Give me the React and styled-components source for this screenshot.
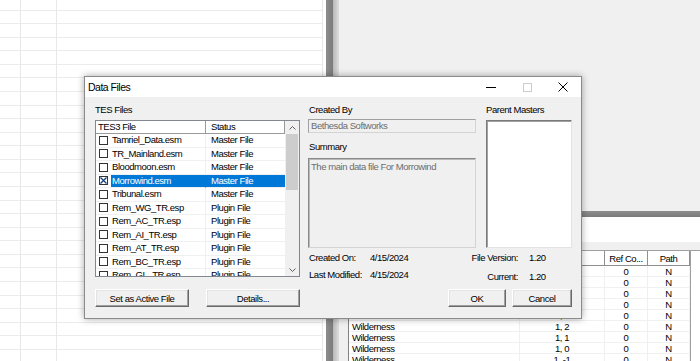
import React from "react";
import styled, { createGlobalStyle } from "styled-components";

const FONT = `"Liberation Sans", Arial, sans-serif`;

const GlobalStyle = createGlobalStyle`
  html, body { margin: 0; padding: 0; background: #fff; }
  body { font-family: ${FONT}; font-size: 9.5px; letter-spacing: -0.45px; color: #000; }
  * { box-sizing: border-box; }
`;

/* ---------- background app ---------- */

const Desktop = styled.div`
  position: relative;
  display: flex;
  width: 700px;
  height: 361px;
  overflow: hidden;
`;

const Sheet = styled.div`
  display: flex;
  width: 323px;
  flex: none;
  background-color: #fff;
  background-image: repeating-linear-gradient(
    to bottom,
    transparent 0,
    transparent 12.57px,
    #ececec 12.57px,
    #ececec 13.57px
  );
  background-position: 0 -3px;
`;

const SheetCol = styled.div`
  width: ${(p) => p.$w}px;
  border-right: 1px solid #e8e8e8;
`;

const Splitter = styled.div`
  width: 16px;
  flex: none;
  background: linear-gradient(
    to right,
    #fff 0,
    #fff 3px,
    #8c8c8c 3px,
    #7c7c7c 10px,
    #b8b8b8 10px,
    #dedede 16px
  );
`;

const RightPane = styled.div`
  flex: 1;
  display: flex;
  flex-direction: column;
  background: #f0f0f0;
`;

const Strip = styled.div`
  flex: none;
  height: ${(p) => p.$h}px;
  background: ${(p) => p.$bg || "transparent"};
`;

const TableArea = styled.div`
  flex: 1;
  min-height: 0;
  display: flex;
  padding-left: 9px;
  background: #f0f0f0;
  overflow: hidden;
`;

const Table = styled.div`
  width: 353px;
  background: #fff;
  border-left: 1px solid #828282;
  border-top: 1px solid #a0a0a0;
`;

const TRow = styled.div`
  display: grid;
  grid-template-columns: 171px 85px 43px 42px;
  height: ${(p) => (p.$head ? 15 : 11)}px;
  border-right: 1px solid #a0a0a0;
  width: 342px;
`;

const TCell = styled.div`
  display: flex;
  align-items: center;
  justify-content: ${(p) => (p.$left ? "flex-start" : "center")};
  padding-left: ${(p) => (p.$left ? 3 : 0)}px;
  white-space: nowrap;
  overflow: hidden;
  line-height: 11px;
  border-right: 1px solid ${(p) => (p.$head ? "#8f8f8f" : "#f0f0f0")};
  border-bottom: 1px solid ${(p) => (p.$head ? "#8f8f8f" : "#f0f0f0")};
`;

/* ---------- dialog ---------- */

const Window = styled.div`
  position: absolute;
  left: 84px;
  top: 76px;
  width: 498px;
  height: 243px;
  display: flex;
  flex-direction: column;
  border: 1px solid #8a8a8a;
  background: #f0f0f0;
  box-shadow: 0 0 7px rgba(0, 0, 0, 0.35);
`;

const TitleBar = styled.div`
  height: 20px;
  flex: none;
  display: flex;
  align-items: center;
  background: #fff;
`;

const Title = styled.div`
  flex: 1;
  padding-left: 3px;
  font-size: 10.5px;
  letter-spacing: -0.5px;
`;

const Ctl = styled.div`
  width: 36px;
  height: 20px;
  display: flex;
  align-items: center;
  justify-content: center;
`;

const MinGlyph = styled.div`
  width: 10px;
  height: 1px;
  background: #000;
`;

const MaxGlyph = styled.div`
  width: 9px;
  height: 9px;
  border: 1px solid #cccccc;
`;

const Body = styled.div`
  flex: 1;
  display: flex;
  gap: 8px;
  padding: 6px 9px 11px 10px;
`;

const Pane = styled.div`
  display: flex;
  flex-direction: column;
  width: ${(p) => p.$w}px;
`;

const Label = styled.div`
  height: 13px;
  line-height: 13px;
  white-space: nowrap;
  padding-left: ${(p) => p.$pad || 0}px;
  margin-top: ${(p) => p.$mt || 0}px;
`;

const ListView = styled.div`
  margin-top: 4px;
  height: 157px;
  display: flex;
  border: 1px solid #828790;
  background: #fff;
`;

const ListBody = styled.div`
  width: 189px;
  overflow: hidden;
`;

const LRow = styled.div`
  display: grid;
  grid-template-columns: 110px 79px;
  height: ${(p) => (p.$head ? 13 : 13.5)}px;
`;

const HeadCell = styled.div`
  padding-left: ${(p) => p.$pad}px;
  line-height: 12px;
  border-right: 1px solid #9a9a9a;
  border-bottom: 1px solid #9a9a9a;
  white-space: nowrap;
`;

const NameCell = styled.div`
  display: flex;
  align-items: center;
  padding-left: 3px;
  border-right: 1px solid ${(p) => (p.$sel ? "#0078d7" : "#f0f0f0")};
  border-bottom: 1px solid #f0f0f0;
`;

const NameText = styled.div`
  flex: 1;
  align-self: stretch;
  margin-left: 3px;
  padding-left: 1px;
  line-height: 12.5px;
  white-space: nowrap;
  background: ${(p) => (p.$sel ? "#0078d7" : "transparent")};
  color: ${(p) => (p.$sel ? "#fff" : "#000")};
`;

const StatusCell = styled.div`
  padding-left: 5px;
  line-height: 12.5px;
  white-space: nowrap;
  border-bottom: 1px solid #f0f0f0;
  background: ${(p) => (p.$sel ? "#0078d7" : "transparent")};
  color: ${(p) => (p.$sel ? "#fff" : "#000")};
`;

const Box = styled.div`
  width: 9px;
  height: 9px;
  flex: none;
  border: 1px solid #333;
  background: #fff;
`;

const Scroll = styled.div`
  width: 14px;
  flex: none;
  display: flex;
  flex-direction: column;
  background: #f0f0f0;
`;

const ScrollBtn = styled.div`
  height: 13px;
  display: flex;
  align-items: center;
  justify-content: center;
`;

const Thumb = styled.div`
  height: 56px;
  margin: 0 1px;
  background: #cdcdcd;
`;

const Track = styled.div`
  flex: 1;
`;

const BtnRow = styled.div`
  margin-top: auto;
  display: flex;
  justify-content: ${(p) => p.$justify || "space-between"};
  gap: 6px;
`;

const Button = styled.div`
  width: ${(p) => p.$w}px;
  height: 18px;
  display: flex;
  align-items: center;
  justify-content: center;
  background: #f0f0f0;
  border: 1px solid;
  border-color: #fff #696969 #696969 #fff;
  box-shadow: inset -1px -1px #a0a0a0, inset 1px 1px #e3e3e3;
  white-space: nowrap;
`;

const TopRow = styled.div`
  display: flex;
  gap: 10px;
`;

const Field = styled.div`
  margin-top: 3px;
  height: 14px;
  padding-left: 2px;
  line-height: 12px;
  color: #6d6d6d;
  border: 1px solid;
  border-color: #a0a0a0 #d4d4d4 #d4d4d4 #a0a0a0;
  white-space: nowrap;
`;

const Summary = styled.div`
  margin-top: 5px;
  height: 90px;
  padding: 1px 2px;
  line-height: 13px;
  color: #6d6d6d;
  border: 1px solid;
  border-color: #8a8a8a #d4d4d4 #d4d4d4 #8a8a8a;
  box-shadow: inset 1px 1px #b8b8b8;
`;

const ListBox = styled.div`
  margin-top: 4px;
  height: 128px;
  background: #fff;
  border: 1px solid;
  border-color: #7a7a7a #e3e3e3 #e3e3e3 #7a7a7a;
  box-shadow: inset 1px 1px #a0a0a0;
`;

const InfoRow = styled.div`
  margin-top: 3px;
  display: flex;
`;

const InfoGrid = styled.div`
  display: grid;
  grid-template-columns: 61px auto;
  row-gap: 1px;
  padding-left: 1px;
  line-height: 13px;
  white-space: nowrap;
`;

const VersionGrid = styled.div`
  margin-left: auto;
  display: grid;
  grid-template-columns: auto 43px;
  column-gap: 11px;
  row-gap: 6px;
  line-height: 13px;
  white-space: nowrap;
`;

const RightText = styled.div`
  text-align: right;
`;

/* ---------- data ---------- */

const files = [
  ["Tamriel_Data.esm", "Master File"],
  ["TR_Mainland.esm", "Master File"],
  ["Bloodmoon.esm", "Master File"],
  ["Morrowind.esm", "Master File", true],
  ["Tribunal.esm", "Master File"],
  ["Rem_WG_TR.esp", "Plugin File"],
  ["Rem_AC_TR.esp", "Plugin File"],
  ["Rem_AI_TR.esp", "Plugin File"],
  ["Rem_AT_TR.esp", "Plugin File"],
  ["Rem_BC_TR.esp", "Plugin File"],
  ["Rem_GL_TR.esp", "Plugin File"],
];

const cells = ["3, 1", "3, 0", "2, 4", "2, 3", "2, 2", "1, 2", "1, 1", "1, 0", "1, -1"];

const Chevron = ({ down }) => (
  <svg width="7" height="4" viewBox="0 0 7 4">
    <polyline
      points={down ? "0.5,0.5 3.5,3.5 6.5,0.5" : "0.5,3.5 3.5,0.5 6.5,3.5"}
      fill="none"
      stroke="#606060"
      strokeWidth="1"
    />
  </svg>
);

const CheckedBox = () => (
  <svg width="9" height="9" viewBox="0 0 9 9" style={{ flex: "none" }}>
    <rect x="0.5" y="0.5" width="8" height="8" fill="#fff" stroke="#333" />
    <path d="M1.5 1.5 L7.5 7.5 M7.5 1.5 L1.5 7.5" stroke="#123f7a" strokeWidth="1.3" />
  </svg>
);

const CloseGlyph = () => (
  <svg width="10" height="10" viewBox="0 0 10 10">
    <path d="M0.5 0.5 L9.5 9.5 M9.5 0.5 L0.5 9.5" stroke="#000" strokeWidth="1" />
  </svg>
);

export default function App() {
  return (
    <Desktop>
      <GlobalStyle />
      <Sheet>
        <SheetCol $w={21} />
        <SheetCol $w={36} />
        <SheetCol $w={266} />
      </Sheet>
      <Splitter />
      <RightPane>
        <Strip $h={211} />
        <Strip $h={6} $bg="linear-gradient(#8e8e8e, #7b7b7b)" />
        <Strip $h={25} $bg="#fff" />
        <Strip $h={8} />
        <TableArea>
          <Table>
            <TRow $head>
              <TCell $head $left>Cell</TCell>
              <TCell $head>Grid</TCell>
              <TCell $head>Ref Co...</TCell>
              <TCell $head>Path</TCell>
            </TRow>
            {cells.map((c) => (
              <TRow key={c}>
                <TCell $left>Wilderness</TCell>
                <TCell>{c}</TCell>
                <TCell>0</TCell>
                <TCell>N</TCell>
              </TRow>
            ))}
          </Table>
        </TableArea>
      </RightPane>

      <Window>
        <TitleBar>
          <Title>Data Files</Title>
          <Ctl>
            <MinGlyph />
          </Ctl>
          <Ctl>
            <MaxGlyph />
          </Ctl>
          <Ctl>
            <CloseGlyph />
          </Ctl>
        </TitleBar>
        <Body>
          <Pane $w={205}>
            <Label>TES Files</Label>
            <ListView>
              <ListBody>
                <LRow $head>
                  <HeadCell $pad={2}>TES3 File</HeadCell>
                  <HeadCell $pad={5}>Status</HeadCell>
                </LRow>
                {files.map(([name, status, sel]) => (
                  <LRow key={name}>
                    <NameCell $sel={sel}>
                      {sel ? <CheckedBox /> : <Box />}
                      <NameText $sel={sel}>{name}</NameText>
                    </NameCell>
                    <StatusCell $sel={sel}>{status}</StatusCell>
                  </LRow>
                ))}
              </ListBody>
              <Scroll>
                <ScrollBtn>
                  <Chevron />
                </ScrollBtn>
                <Thumb />
                <Track />
                <ScrollBtn>
                  <Chevron down />
                </ScrollBtn>
              </Scroll>
            </ListView>
            <BtnRow>
              <Button $w={94}>Set as Active File</Button>
              <Button $w={94}>Details...</Button>
            </BtnRow>
          </Pane>

          <Pane $w={264}>
            <TopRow>
              <Pane $w={168}>
                <Label $pad={1}>Created By</Label>
                <Field>Bethesda Softworks</Field>
                <Label $pad={1} $mt={7}>
                  Summary
                </Label>
                <Summary>The main data file For Morrowind</Summary>
              </Pane>
              <Pane $w={86}>
                <Label>Parent Masters</Label>
                <ListBox />
              </Pane>
            </TopRow>
            <InfoRow>
              <InfoGrid>
                <div>Created On:</div>
                <div>4/15/2024</div>
                <div>Last Modified:</div>
                <div>4/15/2024</div>
              </InfoGrid>
              <VersionGrid>
                <RightText>File Version:</RightText>
                <div>1.20</div>
                <RightText>Current:</RightText>
                <div>1.20</div>
              </VersionGrid>
            </InfoRow>
            <BtnRow $justify="flex-end">
              <Button $w={58}>OK</Button>
              <Button $w={60}>Cancel</Button>
            </BtnRow>
          </Pane>
        </Body>
      </Window>
    </Desktop>
  );
}
